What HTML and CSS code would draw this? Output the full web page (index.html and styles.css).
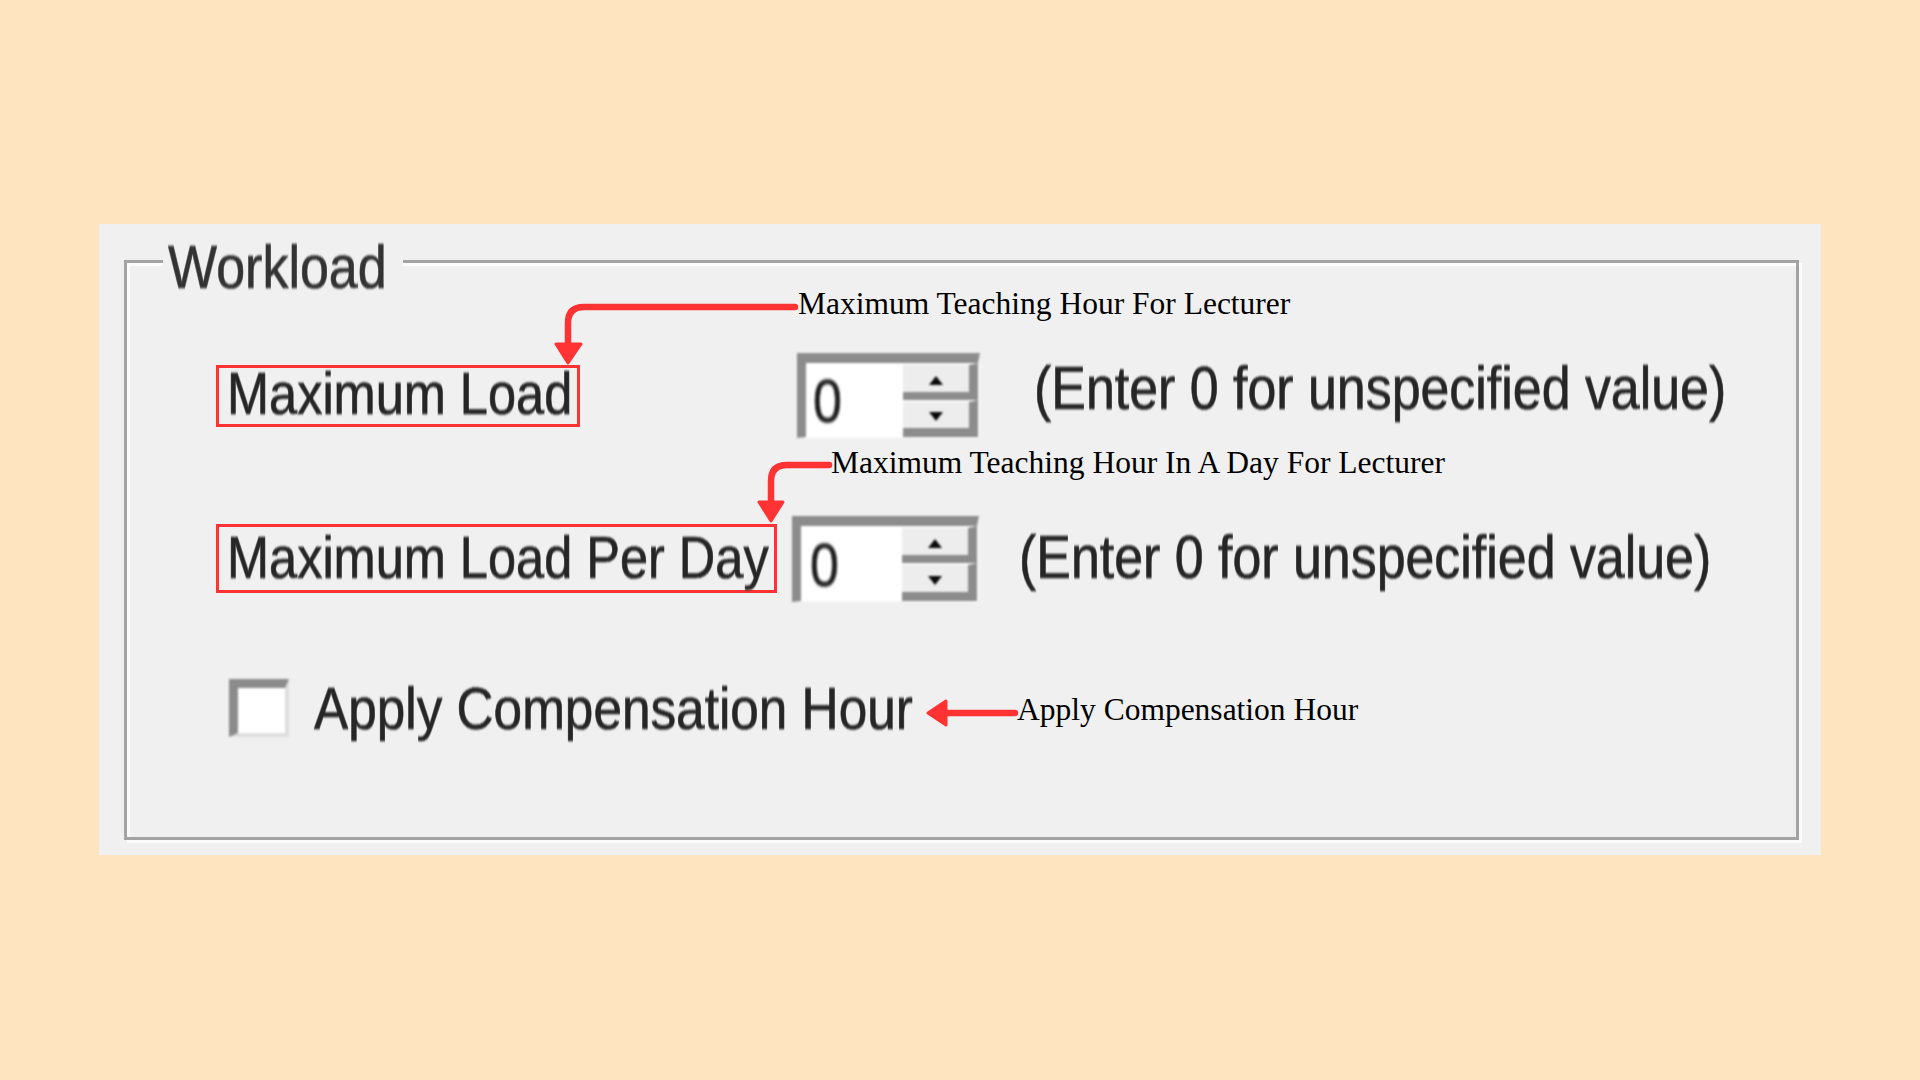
FILE: index.html
```html
<!DOCTYPE html>
<html lang="en">
<head>
<meta charset="utf-8">
<title>Workload</title>
<link rel="stylesheet" href="styles.css">
</head>
<body>
<div class="stage">
  <div class="panel">
    <div class="group">
      <span class="legend"><span class="ui-text legend-text">Workload</span></span>

      <div class="row row1">
        <div class="tag tag1"><span class="ui-text label-text">Maximum Load</span></div>
        <div class="spin spin1">
          <div class="field"><span class="ui-text digit">0</span></div>
          <div class="buttons">
            <div class="btn btn-up"><span class="tri tri-up"></span></div>
            <div class="btn btn-down"><span class="tri tri-down"></span></div>
          </div>
        </div>
        <span class="ui-text hint hint1">(Enter 0 for unspecified value)</span>
      </div>

      <div class="row row2">
        <div class="tag tag2"><span class="ui-text label-text">Maximum Load Per Day</span></div>
        <div class="spin spin2">
          <div class="field"><span class="ui-text digit">0</span></div>
          <div class="buttons">
            <div class="btn btn-up"><span class="tri tri-up"></span></div>
            <div class="btn btn-down"><span class="tri tri-down"></span></div>
          </div>
        </div>
        <span class="ui-text hint hint2">(Enter 0 for unspecified value)</span>
      </div>

      <div class="row row3">
        <span class="checkbox"></span>
        <span class="ui-text apply-text">Apply Compensation Hour</span>
      </div>
    </div>
  </div>

  <svg class="arrows" width="1920" height="1080" viewBox="0 0 1920 1080" xmlns="http://www.w3.org/2000/svg">
    <g fill="none" stroke="#ff3333" stroke-width="6.5" stroke-linecap="round" stroke-linejoin="round">
      <path d="M795 307 H584 Q568 307 568 323 V346"/>
      <path d="M829 465 H787 Q771 465 771 481 V503"/>
      <path d="M1015 713 H944"/>
    </g>
    <g fill="#ff3333" stroke="#ff3333" stroke-width="3" stroke-linejoin="round">
      <polygon points="556,344 581,344 568,363"/>
      <polygon points="759,502 783,502 771,521"/>
      <polygon points="946,701 946,725 928,713"/>
    </g>
  </svg>

  <span class="note note1">Maximum Teaching Hour For Lecturer</span>
  <span class="note note2">Maximum Teaching Hour In A Day For Lecturer</span>
  <span class="note note3">Apply Compensation Hour</span>
</div>
</body>
</html>
```

FILE: styles.css
```css
html, body {
  margin: 0;
  padding: 0;
}

body {
  background: #ffe5bf;
  width: 1920px;
  height: 1080px;
  overflow: hidden;
}

.stage {
  position: relative;
  width: 1920px;
  height: 1080px;
  padding: 224px 0 0 99px;
  box-sizing: border-box;
}

.panel {
  width: 1722px;
  height: 631px;
  background: #f0f0f0;
  padding: 36px 22px 15px 25px;
  box-sizing: border-box;
  display: flex;
  flex-direction: column;
}

.group {
  position: relative;
  flex: 1;
  border: 3px solid #a3a3a3;
  box-shadow: 3px 3px 0 #fbfbfb, inset 3px 3px 0 #fbfbfb;
  padding-top: 90px;
  box-sizing: border-box;
}

.legend {
  position: absolute;
  left: 36px;
  top: -21px;
  height: 51px;
  padding: 0 16px 0 5px;
  background: #f0f0f0;
}

.ui-text {
  display: inline-block;
  font-family: "Liberation Sans", Arial, sans-serif;
  font-size: 51px;
  line-height: 51px;
  height: 51px;
  color: #262626;
  white-space: nowrap;
  -webkit-text-stroke: 0.6px #262626;
  transform: scaleY(1.17);
  filter: blur(0.7px);
}

.legend-text {
  font-size: 52px;
  color: #333333;
  -webkit-text-stroke: 0.6px #333333;
}

.label-text {
  font-size: 50.5px;
}

.hint {
  font-size: 51.9px;
}

.apply-text {
  font-size: 51.3px;
  margin-left: 25px;
  margin-top: 4px;
}

.row {
  display: flex;
  align-items: flex-start;
  padding-left: 89px;
}

.row2 {
  margin-top: 78px;
}

.row3 {
  margin-top: 77px;
}

/* red annotation boxes */
.tag {
  border: 3px solid #ff3333;
  box-sizing: border-box;
  padding-left: 8px;
}

.tag1 {
  width: 364px;
  height: 62px;
  margin-top: 12px;
}

.tag2 {
  width: 561px;
  height: 69px;
  margin-top: 8px;
  padding-top: 5px;
}

/* spin (numeric up/down) control */
.spin {
  display: flex;
  border-style: solid;
  border-color: #8c8c8c #f9f9f9 #f9f9f9 #8c8c8c;
  border-width: 10px 2px 1px 9px;
  background: #ffffff;
  filter: blur(0.8px);
}

.spin1 {
  margin-left: 217px;
}

.spin2 {
  margin-left: 15px;
}

.field {
  width: 97px;
  display: flex;
  align-items: center;
  padding-left: 7px;
  box-sizing: border-box;
  background: #ffffff;
}

.spin2 .field {
  width: 101px;
  padding-left: 9px;
}

.digit {
  font-size: 52px;
  color: #1e1e1e;
  margin-top: 3px;
}

.buttons {
  width: 75px;
  display: flex;
  flex-direction: column;
}

.btn {
  background: #ededed;
  border-top: 2px solid #fbfbfb;
  border-right: 9px solid #8c8c8c;
  display: flex;
  justify-content: center;
  align-items: center;
  box-sizing: border-box;
}

.btn-up {
  height: 37px;
  border-bottom: 8px solid #8c8c8c;
}

.btn-down {
  height: 37px;
  border-bottom: 9px solid #8c8c8c;
}

.spin2 .btn-down {
  height: 38px;
}

.tri {
  width: 0;
  height: 0;
  border-left: 7px solid transparent;
  border-right: 7px solid transparent;
}

.tri-up {
  border-bottom: 9px solid #0a0a0a;
  margin-top: 4px;
}

.tri-down {
  border-top: 9px solid #0a0a0a;
  margin-top: 3px;
}

.hint1 {
  margin-left: 54px;
  margin-top: 10px;
}

.hint2 {
  margin-left: 40px;
  margin-top: 16px;
}

/* checkbox */
.checkbox {
  display: block;
  width: 60px;
  height: 58px;
  margin-left: 13px;
  box-sizing: border-box;
  background: #ffffff;
  border-style: solid;
  border-width: 9px 4px 4px 9px;
  border-color: #8b8b8b #dedede #dedede #8b8b8b;
  filter: blur(0.8px);
}

/* annotation overlays */
.arrows {
  position: absolute;
  left: 0;
  top: 0;
  pointer-events: none;
}

.note {
  position: absolute;
  font-family: "Liberation Serif", "Times New Roman", serif;
  font-size: 31.5px;
  line-height: 31.5px;
  color: #000000;
  white-space: nowrap;
}

.note1 {
  left: 798px;
  top: 288px;
}

.note2 {
  left: 831px;
  top: 447px;
}

.note3 {
  left: 1017px;
  top: 694px;
}
```
